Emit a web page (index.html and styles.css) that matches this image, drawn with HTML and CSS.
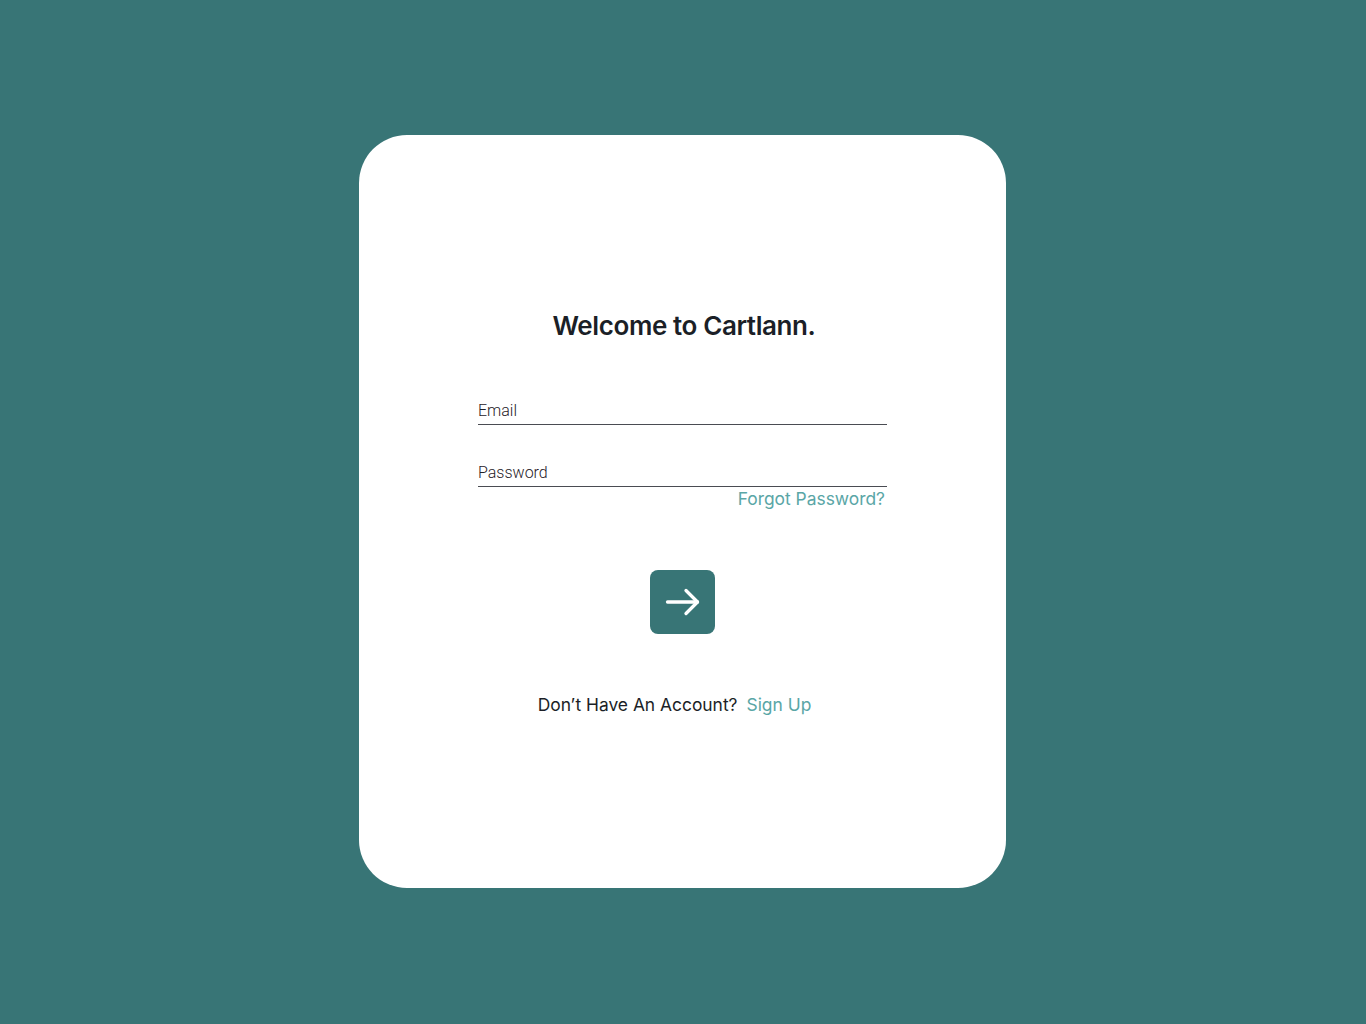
FILE: index.html
```html
<!DOCTYPE html>
<html>
<head>
<meta charset="utf-8">
<link rel="stylesheet" href="styles.css">
</head>
<body>
<main class="page">
  <section class="card">
    <h1 class="title">Welcome to Cartlann.</h1>
    <form class="form">
      <label class="field">
        <span class="field-label">Email</span>
      </label>
      <label class="field field-password">
        <span class="field-label">Password</span>
      </label>
      <div class="forgot-row"><a class="link forgot">Forgot Password?</a></div>
      <button class="submit" type="button" aria-label="Sign in">
        <svg width="36" height="30" viewBox="0 0 36 30" fill="none" stroke="#fff" stroke-width="3.3" stroke-linecap="round" stroke-linejoin="round"><path d="M2.5 15h30"/><path d="M21 3.5l11.5 11.5-11.5 11.5"/></svg>
      </button>
      <p class="signup">Don’t Have An Account?<a class="link">Sign Up</a></p>
    </form>
  </section>
</main>
</body>
</html>
```
FILE: styles.css
```css
html, body {
  margin: 0;
  padding: 0;
}
body {
  background: #387576;
  font-family: Inter, "Noto Sans", sans-serif;
}
.page {
  height: 1024px;
  display: flex;
  align-items: flex-start;
  justify-content: center;
  padding-top: 135px;
  box-sizing: border-box;
}
.card {
  width: 647px;
  height: 753px;
  margin-right: 1px;
  background: #fff;
  border-radius: 48px;
  box-sizing: border-box;
  padding-top: 175px;
  display: flex;
  flex-direction: column;
  align-items: center;
}
.title {
  margin: 0 0 0 3px;
  font-size: 26px;
  line-height: 32px;
  font-weight: 600;
  color: #1b1f27;
  letter-spacing: -0.4px;
}
.form {
  width: 409px;
  margin-top: 58px;
  display: flex;
  flex-direction: column;
}
.field {
  display: block;
  border-bottom: 1.5px solid #4a4c52;
  height: 25px;
  box-sizing: border-box;
}
.field-password {
  margin-top: 37px;
}
.field-label {
  font-family: Roboto, sans-serif;
  font-weight: 300;
  font-size: 16px;
  line-height: 22px;
  color: #1f2128;
  display: block;
}
.forgot-row {
  display: flex;
  justify-content: flex-end;
  margin-top: 1px;
}
.link {
  color: #5aa6a6;
  font-size: 17.4px;
  line-height: 22px;
}
.forgot {
  margin-right: 2px;
}
.submit {
  align-self: center;
  margin-top: 60px;
  width: 65px;
  height: 64px;
  border: none;
  border-radius: 8px;
  background: #387576;
  display: flex;
  align-items: center;
  justify-content: center;
  padding: 0;
}
.signup {
  align-self: center;
  margin: 60px 0 0;
  font-size: 17.4px;
  line-height: 22px;
  color: #1b1f27;
  display: flex;
  gap: 9px;
  margin-left: -16px;
}
```
